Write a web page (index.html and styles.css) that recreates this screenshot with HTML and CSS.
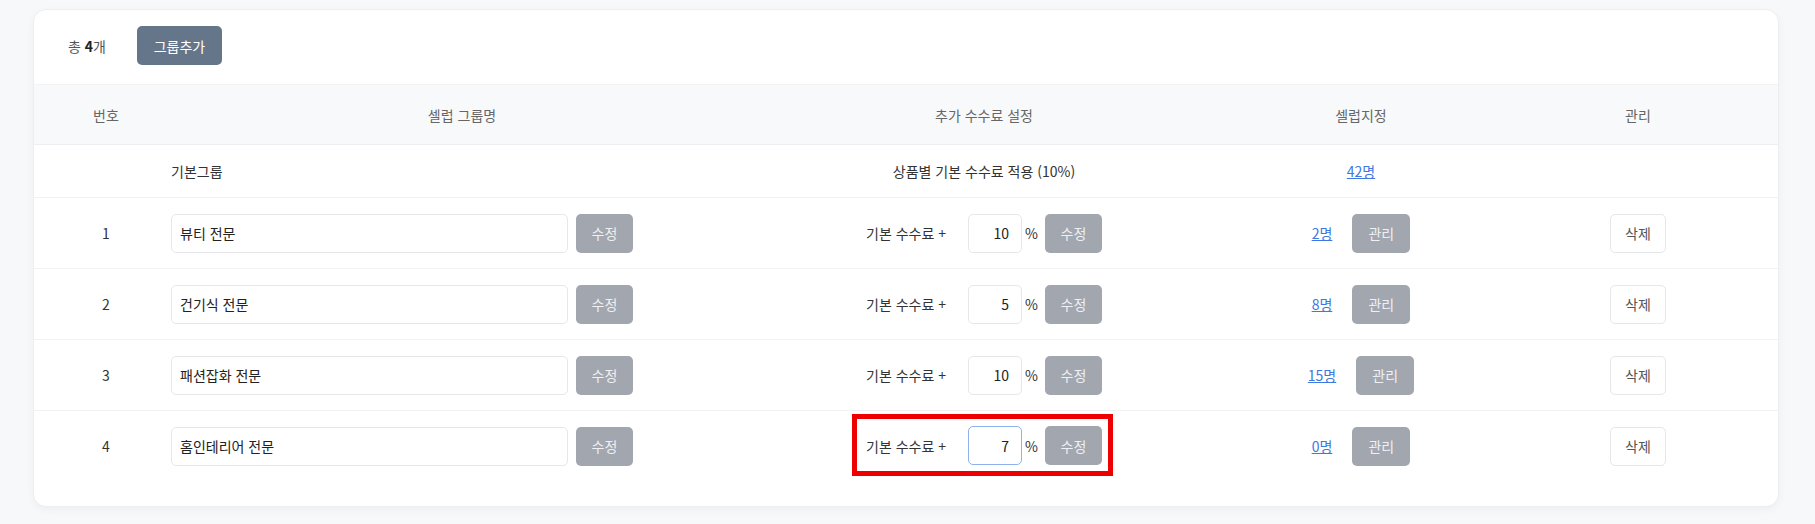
FILE: index.html
```html
<!DOCTYPE html>
<html lang="ko">

<head>
    <meta charset="UTF-8">
    <title>셀럽 그룹 관리</title>
    <link rel="stylesheet" href="styles.css">
</head>

<body>
    <div class="card">
        <div class="toolbar">
            <span class="total">총 <strong>4</strong>개</span>
            <button type="button" class="btn btn-dark">그룹추가</button>
        </div>

        <table class="group-table">
            <colgroup>
                <col class="col-no">
                <col class="col-name">
                <col class="col-fee">
                <col class="col-celeb">
                <col>
            </colgroup>
            <thead>
                <tr>
                    <th class="cell-no">번호</th>
                    <th>셀럽 그룹명</th>
                    <th>추가 수수료 설정</th>
                    <th>셀럽지정</th>
                    <th class="cell-manage">관리</th>
                </tr>
            </thead>
            <tbody>
                <tr class="row-base">
                    <td class="cell-no"></td>
                    <td class="cell-name">기본그룹</td>
                    <td class="cell-center">상품별 기본 수수료 적용 (10%)</td>
                    <td class="cell-center"><a href="#" class="count">42명</a></td>
                    <td class="cell-manage"></td>
                </tr>
                <tr>
                    <td class="cell-no">1</td>
                    <td class="cell-name">
                        <div class="name-edit">
                            <input type="text" class="name-input" value="뷰티 전문">
                            <button type="button" class="btn btn-grey">수정</button>
                        </div>
                    </td>
                    <td class="cell-center">
                        <div class="fee-edit">
                            <span class="fee-label">기본 수수료 +</span>
                            <input type="text" class="fee-input" value="10">
                            <span class="fee-unit">%</span>
                            <button type="button" class="btn btn-grey">수정</button>
                        </div>
                    </td>
                    <td class="cell-center">
                        <div class="celeb">
                            <a href="#" class="count">2명</a>
                            <button type="button" class="btn btn-grey">관리</button>
                        </div>
                    </td>
                    <td class="cell-manage"><button type="button" class="btn btn-line">삭제</button></td>
                </tr>
                <tr>
                    <td class="cell-no">2</td>
                    <td class="cell-name">
                        <div class="name-edit">
                            <input type="text" class="name-input" value="건기식 전문">
                            <button type="button" class="btn btn-grey">수정</button>
                        </div>
                    </td>
                    <td class="cell-center">
                        <div class="fee-edit">
                            <span class="fee-label">기본 수수료 +</span>
                            <input type="text" class="fee-input" value="5">
                            <span class="fee-unit">%</span>
                            <button type="button" class="btn btn-grey">수정</button>
                        </div>
                    </td>
                    <td class="cell-center">
                        <div class="celeb">
                            <a href="#" class="count">8명</a>
                            <button type="button" class="btn btn-grey">관리</button>
                        </div>
                    </td>
                    <td class="cell-manage"><button type="button" class="btn btn-line">삭제</button></td>
                </tr>
                <tr>
                    <td class="cell-no">3</td>
                    <td class="cell-name">
                        <div class="name-edit">
                            <input type="text" class="name-input" value="패션잡화 전문">
                            <button type="button" class="btn btn-grey">수정</button>
                        </div>
                    </td>
                    <td class="cell-center">
                        <div class="fee-edit">
                            <span class="fee-label">기본 수수료 +</span>
                            <input type="text" class="fee-input" value="10">
                            <span class="fee-unit">%</span>
                            <button type="button" class="btn btn-grey">수정</button>
                        </div>
                    </td>
                    <td class="cell-center">
                        <div class="celeb">
                            <a href="#" class="count">15명</a>
                            <button type="button" class="btn btn-grey">관리</button>
                        </div>
                    </td>
                    <td class="cell-manage"><button type="button" class="btn btn-line">삭제</button></td>
                </tr>
                <tr>
                    <td class="cell-no">4</td>
                    <td class="cell-name">
                        <div class="name-edit">
                            <input type="text" class="name-input" value="홈인테리어 전문">
                            <button type="button" class="btn btn-grey">수정</button>
                        </div>
                    </td>
                    <td class="cell-center">
                        <!-- 강조 표시된 영역 -->
                        <div class="fee-edit highlight">
                            <span class="fee-label">기본 수수료 +</span>
                            <input type="text" class="fee-input focused" value="7">
                            <span class="fee-unit">%</span>
                            <button type="button" class="btn btn-grey">수정</button>
                        </div>
                    </td>
                    <td class="cell-center">
                        <div class="celeb">
                            <a href="#" class="count">0명</a>
                            <button type="button" class="btn btn-grey">관리</button>
                        </div>
                    </td>
                    <td class="cell-manage"><button type="button" class="btn btn-line">삭제</button></td>
                </tr>
            </tbody>
        </table>
    </div>
</body>

</html>
```

FILE: styles.css
```css
/* 기본 레이아웃 */
body {
    margin: 0;
    padding: 9px 36px 18px 33px;
    background: #f7f8fa;
    font-family: "Noto Sans CJK KR", sans-serif;
    font-size: 14px;
    color: #333;
}

.card {
    background: #fff;
    border: 1px solid #eceef1;
    border-radius: 13px;
    box-shadow: 0 3px 8px rgba(0, 0, 0, 0.04);
    padding-bottom: 25px;
    overflow: hidden;
}

/* 상단 툴바 */
.toolbar {
    display: flex;
    align-items: center;
    gap: 31px;
    padding: 16px 0 19px 34px;
}

.total {
    color: #555;
}

.total strong {
    color: #222;
    font-weight: 600;
}

/* 버튼 */
.btn {
    height: 39px;
    border: 0;
    border-radius: 5px;
    padding: 0 14px;
    font-family: inherit;
    font-size: 14px;
    cursor: pointer;
}

.btn-dark {
    width: 85px;
    background: #66768a;
    color: #fff;
}

.btn-grey {
    width: 57px;
    padding: 0;
    background: #a2a6af;
    color: #eef0f3;
}

.btn-line {
    width: 56px;
    padding: 0;
    background: #fff;
    border: 1px solid #e5e7eb;
    color: #555;
}

/* 테이블 */
.group-table {
    width: 100%;
    border-collapse: collapse;
    table-layout: fixed;
}

.col-no {
    width: 130px;
}

.col-name {
    width: 596px;
}

.col-fee {
    width: 448px;
}

.col-celeb {
    width: 306px;
}

.group-table th {
    height: 59px;
    background: #f8f9fb;
    border-top: 1px solid #f1f3f5;
    border-bottom: 1px solid #eceef1;
    font-weight: normal;
    color: #666;
    text-align: center;
    padding: 0;
}

.group-table td {
    height: 70px;
    border-bottom: 1px solid #f1f2f4;
    padding: 0;
    vertical-align: middle;
}

.group-table tbody tr:last-child td {
    border-bottom: 0;
}

.group-table .row-base td {
    height: 52px;
}

.cell-no {
    text-align: center;
    padding-left: 14px !important;
}

.cell-name {
    padding-left: 7px !important;
}

.cell-center {
    text-align: center;
}

.cell-manage {
    text-align: center;
    padding-right: 16px !important;
}

/* 그룹명 수정 */
.name-edit {
    display: flex;
    align-items: center;
    gap: 8px;
}

.name-input {
    width: 397px;
    height: 39px;
    box-sizing: border-box;
    border: 1px solid #e5e7eb;
    border-radius: 5px;
    padding: 0 8px;
    font-family: inherit;
    font-size: 14px;
    color: #222;
}

/* 수수료 설정 */
.fee-edit {
    display: inline-flex;
    align-items: center;
}

.fee-label {
    margin-right: 22px;
}

.fee-input {
    width: 54px;
    height: 39px;
    box-sizing: border-box;
    border: 1px solid #e5e7eb;
    border-radius: 5px;
    padding: 0 12px;
    text-align: right;
    font-family: inherit;
    font-size: 14px;
    color: #222;
}

.fee-input.focused {
    border-color: #8fb2ec;
}

.fee-unit {
    margin: 0 7px 0 3px;
}

.highlight {
    border: 5px solid #ee0000;
    padding: 7px 6px 6px 9px;
    margin: -18px -3px -16px -6px;
}

/* 셀럽 지정 */
.celeb {
    display: inline-flex;
    align-items: center;
    gap: 20px;
}

.celeb .btn-grey {
    width: 58px;
}

.count {
    color: #3e78e0;
    text-decoration: underline;
}
```
